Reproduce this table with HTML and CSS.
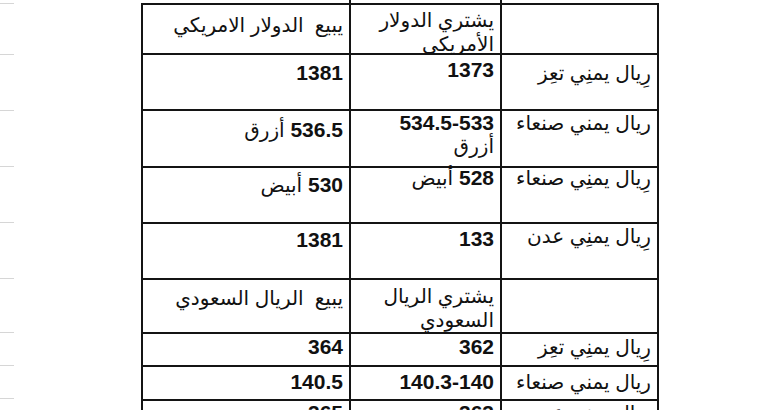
FILE: index.html
```html
<!DOCTYPE html>
<html lang="ar">
<head>
<meta charset="utf-8">
<title>أسعار الصرف</title>
<link rel="stylesheet" href="styles.css">
</head>
<body>
<div class="page">
  <div class="gutter">
    <div class="g r1"></div>
    <div class="g r2"></div>
    <div class="g r3"></div>
    <div class="g r4"></div>
    <div class="g r5"></div>
    <div class="g r6"></div>
    <div class="g r7"></div>
    <div class="g r8"></div>
    <div class="g r9"></div>
  </div>
  <table class="rates" dir="rtl">
    <colgroup>
      <col class="c-label">
      <col class="c-buy">
      <col class="c-sell">
    </colgroup>
    <tr class="r1">
      <td class="label stub"></td>
      <td class="buy stub"><div class="clip"><span class="ar">يشتري الدولار الأمريكي</span></div></td>
      <td class="sell"><span class="ar">يبيع&nbsp; الدولار الامريكي</span></td>
    </tr>
    <tr class="r2">
      <td class="label"><span class="ar">رِيال يمنِي تعِز</span></td>
      <td class="buy"><b>1373</b></td>
      <td class="sell"><b>1381</b></td>
    </tr>
    <tr class="r3">
      <td class="label"><span class="ar">ريال يمني صنعاء</span></td>
      <td class="buy"><b>534.5-533</b> <span class="ar">أزرق</span></td>
      <td class="sell"><b>536.5</b> <span class="ar">أزرق</span></td>
    </tr>
    <tr class="r4">
      <td class="label"><span class="ar">رِيال يمنِي صنعاء</span></td>
      <td class="buy"><b>528</b> <span class="ar">أبيض</span></td>
      <td class="sell"><b>530</b> <span class="ar">أبيض</span></td>
    </tr>
    <tr class="r5">
      <td class="label"><span class="ar">رِيال يمنِي عدن</span></td>
      <td class="buy"><b>133</b></td>
      <td class="sell"><b>1381</b></td>
    </tr>
    <tr class="r6">
      <td class="label"></td>
      <td class="buy"><span class="ar">يشتري الريال السعودي</span></td>
      <td class="sell"><span class="ar">يبيع&nbsp; الريال السعودي</span></td>
    </tr>
    <tr class="r7 tight">
      <td class="label"><span class="ar">رِيال يمنِي تعِز</span></td>
      <td class="buy"><b>362</b></td>
      <td class="sell"><b>364</b></td>
    </tr>
    <tr class="r8 tight">
      <td class="label"><span class="ar">ريال يمني صنعاء</span></td>
      <td class="buy"><b>140.3-140</b></td>
      <td class="sell"><b>140.5</b></td>
    </tr>
    <tr class="r9 tight">
      <td class="label"><span class="ar">رِيال يمنِي عدن</span></td>
      <td class="buy"><b>363</b></td>
      <td class="sell"><b>365</b></td>
    </tr>
  </table>
</div>
</body>
</html>
```

FILE: styles.css
```css
html, body {
  margin: 0;
  padding: 0;
  background: #ffffff;
}

body {
  width: 760px;
  height: 410px;
  overflow: hidden;
  font-family: "Liberation Sans", "DejaVu Sans", sans-serif;
  color: #111111;
}

.page {
  display: flex;
  align-items: flex-start;
  padding-top: 3px;
}

.gutter {
  width: 141px;
  flex: none;
  display: flex;
  flex-direction: column;
}

.g {
  width: 14px;
  box-sizing: border-box;
  border-top: 1px solid #d6d6d6;
}

.g.r1 { height: 51px; }
.g.r2 { height: 56px; }
.g.r3 { height: 56px; }
.g.r4 { height: 56px; }
.g.r5 { height: 56px; }
.g.r6 { height: 54px; }
.g.r7 { height: 33px; }
.g.r8 { height: 33px; }
.g.r9 { height: 20px; }

.rates {
  flex: none;
  table-layout: fixed;
  border-collapse: separate;
  border-spacing: 0;
  width: 518px;
  border-top: 2px solid #141414;
  border-right: 2px solid #141414;
}

.c-label { width: 157px; }
.c-buy { width: 151px; }
.c-sell { width: 208px; }

.rates td {
  box-sizing: border-box;
  border-left: 2px solid #141414;
  border-bottom: 2px solid #141414;
  padding: 3px 6px 0 6px;
  vertical-align: top;
  text-align: right;
  font-size: 21px;
  line-height: 23px;
}

.rates td.stub {
  position: relative;
}

.rates td.stub::before {
  content: "";
  position: absolute;
  left: -2px;
  top: -5px;
  width: 2px;
  height: 3px;
  background: #141414;
}

.clip {
  height: 45px;
  overflow: hidden;
}

.rates b {
  font-weight: bold;
}

.ar {
  font-size: 20px;
  font-weight: normal;
}

.rates td.sell { padding-top: 6px; }
.rates tr.r1 td.sell { padding-top: 8px; }
.rates tr.r3 td.sell { padding-top: 7px; }
.rates tr.r4 td.sell { padding-top: 5px; }
.rates tr.r5 td.sell { padding-top: 4px; }

.rates tr.r2 td.label { padding-top: 6px; }
.rates tr.r3 td.label,
.rates tr.r3 td.buy,
.rates tr.r5 td.label { padding-top: 0; }
.rates tr.r4 td.label,
.rates tr.r4 td.buy { padding-top: 0; line-height: 19px; }
.rates tr.r6 td.buy { padding-top: 4px; }

.rates tr.r1 { height: 50px; }
.rates tr.r2 { height: 56px; }
.rates tr.r3 { height: 57px; }
.rates tr.r4 { height: 56px; }
.rates tr.r5 { height: 56px; }
.rates tr.r6 { height: 53px; }
.rates tr.r7 { height: 33px; }
.rates tr.r8 { height: 34px; }
.rates tr.r9 { height: 40px; }

.rates tr.tight td { padding-top: 1px; }
.rates tr.r8 td { padding-top: 3px; }
.rates tr.r9 td { padding-top: 0; }
```
